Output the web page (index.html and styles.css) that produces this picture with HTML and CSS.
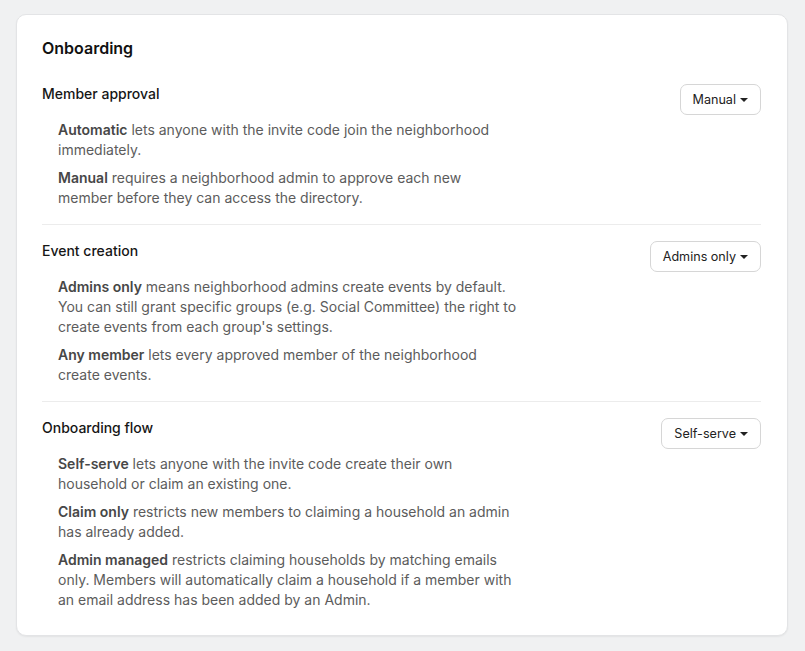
FILE: index.html
```html
<!DOCTYPE html>
<html lang="en">

<head>
    <meta charset="UTF-8">
    <meta name="viewport" content="width=device-width, initial-scale=1.0">
    <title>Onboarding settings</title>
    <link rel="stylesheet" href="styles.css">
</head>

<body>
    <div class="card">
        <h2 class="card-title">Onboarding</h2>

        <div class="setting">
            <div class="setting-info">
                <div class="setting-label">Member approval</div>
                <div class="setting-desc">
                    <p><b>Automatic</b> lets anyone with the invite code join the neighborhood immediately.</p>
                    <p><b>Manual</b> requires a neighborhood admin to approve each new member before they can access the directory.</p>
                </div>
            </div>
            <button class="select-btn">Manual <span class="caret"></span></button>
        </div>

        <div class="setting">
            <div class="setting-info">
                <div class="setting-label">Event creation</div>
                <div class="setting-desc">
                    <p><b>Admins only</b> means neighborhood admins create events by default. You can still grant specific groups (e.g. Social Committee) the right to create events from each group's settings.</p>
                    <p><b>Any member</b> lets every approved member of the neighborhood create events.</p>
                </div>
            </div>
            <button class="select-btn">Admins only <span class="caret"></span></button>
        </div>

        <div class="setting">
            <div class="setting-info">
                <div class="setting-label">Onboarding flow</div>
                <div class="setting-desc">
                    <p><b>Self-serve</b> lets anyone with the invite code create their own household or claim an existing one.</p>
                    <p><b>Claim only</b> restricts new members to claiming a household an admin has already added.</p>
                    <p><b>Admin managed</b> restricts claiming households by matching emails only. Members will automatically claim a household if a member with an email address has been added by an Admin.</p>
                </div>
            </div>
            <button class="select-btn">Self-serve <span class="caret"></span></button>
        </div>
    </div>
</body>

</html>
```

FILE: styles.css
```css
body {
    font-family: Inter, "Noto Sans", sans-serif;
    background-color: #f0f1f2;
    color: #1a1a1a;
    margin: 0;
    padding: 14px 17px 14px 16px;
}

.card {
    background-color: #fff;
    border: 1px solid #e3e4e6;
    border-radius: 10px;
    box-shadow: 0 1px 2px rgba(0, 0, 0, 0.06);
    padding: 21px 26px 25px 25px;
}

.card-title {
    font-size: 16px;
    font-weight: 600;
    line-height: 24px;
    margin: 0 0 8px;
    color: #111;
}

.setting {
    display: flex;
    justify-content: space-between;
    align-items: flex-start;
    padding: 16px 0;
    border-top: 1px solid #ececec;
}

.setting:first-of-type {
    border-top: none;
}

.setting:last-child {
    padding-bottom: 0;
}

.setting-label {
    font-size: 14px;
    font-weight: 500;
    line-height: 20px;
    color: #161616;
}

.setting-desc {
    max-width: 459px;
    margin: 16px 0 0 16px;
    font-size: 14px;
    line-height: 20px;
    color: #5c5c5c;
}

.setting-desc p {
    margin: 0 0 8px;
}

.setting-desc p:last-child {
    margin-bottom: 0;
}

.setting-desc b {
    font-weight: 600;
    color: #474747;
}

.select-btn {
    display: flex;
    align-items: center;
    gap: 4px;
    height: 31px;
    padding: 0 12px;
    font-family: inherit;
    font-size: 12.6px;
    color: #222;
    background-color: #fff;
    border: 1px solid #d6d6d6;
    border-radius: 7px;
    cursor: pointer;
}

.caret {
    width: 0;
    height: 0;
    border-left: 4px solid transparent;
    border-right: 4px solid transparent;
    border-top: 4px solid #222;
}
```
